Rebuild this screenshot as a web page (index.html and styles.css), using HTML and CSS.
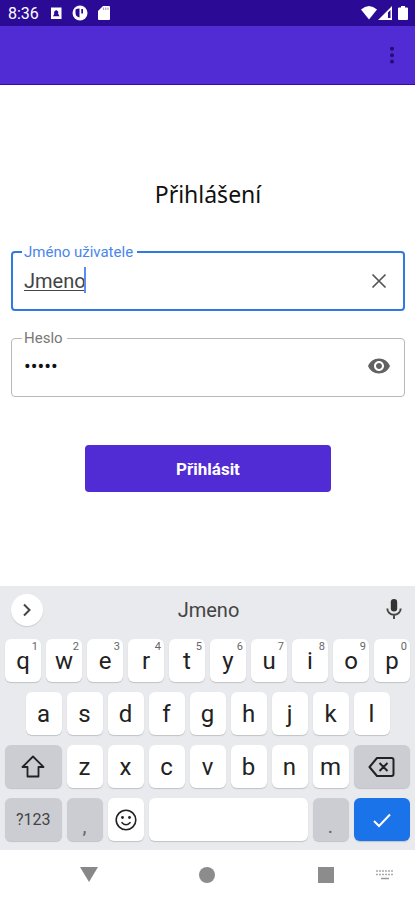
FILE: index.html
```html
<!DOCTYPE html>
<html lang="cs">
<head>
<meta charset="utf-8">
<meta name="viewport" content="width=device-width, initial-scale=1">
<title>Přihlášení</title>
<link rel="stylesheet" href="styles.css">
</head>
<body>
<div class="status">
  <span class="clock">8:36</span>
  <svg class="s-icon" viewBox="0 0 16 16"><path fill="#fff" fill-rule="evenodd" d="M3 2.500h10.500v11.500H3zM8.200 5 6.200 6.500v2.500L5 11.300h6.600L10.200 9V6.500z"/></svg>
  <svg class="s-icon s-round" viewBox="0 0 16 16"><circle cx="8" cy="8" r="7.500" fill="#fff"/><path fill="#2b0a96" d="M3.500 4.500Q5 3.500 7.500 3.500v9Q3.500 11.500 3.500 8zM9.300 4h1.700v4.500H9.300z"/></svg>
  <svg class="s-icon" viewBox="0 0 16 16"><path fill="#fff" d="M7 1h6a1 1 0 0 1 1 1v12a1 1 0 0 1-1 1H3a1 1 0 0 1-1-1V6z"/><path stroke="#a79dd2" stroke-width="1.200" d="M7.500 2.500v2.500M9.700 2.500v2.500M12 2.500v2.500"/></svg>
  <span class="spacer"></span>
  <svg class="s-icon" viewBox="0 0 16 16"><path fill="#fff" d="M0 4.500Q8-2.500 16 4.500L8 14.500z"/></svg>
  <svg class="s-icon" viewBox="0 0 16 16"><path fill="#fff" fill-rule="evenodd" d="M15 1v14H1zM11 7.500V13h2.500V5z"/></svg>
  <svg class="s-icon s-battery" viewBox="0 0 16 16"><path fill="#fff" d="M6 1h4v1.500h2a1 1 0 0 1 1 1V14a1 1 0 0 1-1 1H4a1 1 0 0 1-1-1V3.500a1 1 0 0 1 1-1h2z"/></svg>
</div>
<header class="appbar">
  <button class="icon-btn" aria-label="Další možnosti"><svg viewBox="0 0 24 24" width="24" height="24" fill="#250b75"><circle cx="12" cy="5.800" r="2"/><circle cx="12" cy="12.200" r="2"/><circle cx="12" cy="18.600" r="2"/></svg></button>
</header>
<main class="content">
  <h1>Přihlášení</h1>
  <form class="login">
    <fieldset class="field active">
      <legend><label for="user">Jméno uživatele</label></legend>
      <div class="row">
        <div class="entry"><input id="user" type="text" value="Jmeno" spellcheck="false"><span class="caret"></span></div>
        <button type="button" class="icon-btn" aria-label="Vymazat"><svg viewBox="0 0 24 24" width="24" height="24"><path d="M5.500 5.500l13 13M18.500 5.500l-13 13" stroke="#555" stroke-width="1.700"/></svg></button>
      </div>
    </fieldset>
    <fieldset class="field">
      <legend><label for="pass">Heslo</label></legend>
      <div class="row">
        <div class="entry"><input id="pass" type="password" value="heslo"></div>
        <button type="button" class="icon-btn" aria-label="Zobrazit heslo"><svg viewBox="0 0 24 24" width="24" height="24"><path fill="#626262" d="M12 4.500C7 4.500 2.730 7.610 1 12c1.730 4.390 6 7.500 11 7.500s9.270-3.110 11-7.500c-1.730-4.390-6-7.500-11-7.500zM12 17c-2.760 0-5-2.240-5-5s2.240-5 5-5 5 2.240 5 5-2.240 5-5 5zm0-8c-1.660 0-3 1.340-3 3s1.340 3 3 3 3-1.340 3-3-1.340-3-3-3z"/></svg></button>
      </div>
    </fieldset>
    <button type="submit" class="submit">Přihlásit</button>
  </form>
</main>
<section class="keyboard" aria-label="Klávesnice">
  <div class="suggest">
    <button class="more" aria-label="Více"><svg viewBox="0 0 24 24" width="24" height="24"><path d="M9 6.500l5.500 5.500L9 17.500" fill="none" stroke="#444" stroke-width="2"/></svg></button>
    <button class="word">Jmeno</button>
    <button class="icon-btn mic" aria-label="Hlasové zadávání"><svg viewBox="0 0 24 24" width="24" height="24"><rect x="8.800" y="1" width="6.400" height="12.500" rx="3.200" fill="#333"/><path d="M5.300 10.500a6.700 6.300 0 0 0 13.400 0M12 17v4" fill="none" stroke="#444" stroke-width="1.900"/></svg></button>
  </div>
  <div class="keys">
    <button>q<sup>1</sup></button><button>w<sup>2</sup></button><button>e<sup>3</sup></button><button>r<sup>4</sup></button><button>t<sup>5</sup></button><button>y<sup>6</sup></button><button>u<sup>7</sup></button><button>i<sup>8</sup></button><button>o<sup>9</sup></button><button>p<sup>0</sup></button>
    <button class="indent">a</button><button>s</button><button>d</button><button>f</button><button>g</button><button>h</button><button>j</button><button>k</button><button>l</button>
    <button class="wide grey first" aria-label="Shift"><svg viewBox="0 0 28 28" width="28" height="28"><path d="M14 3.500L3.500 14H8.500v9.500h11V14h5z" fill="none" stroke="#222" stroke-width="1.800" stroke-linejoin="round"/></svg></button><button>z</button><button>x</button><button>c</button><button>v</button><button>b</button><button>n</button><button>m</button><button class="wide grey" aria-label="Smazat"><svg viewBox="0 0 28 28" width="28" height="28"><path d="M9 5h14.500a2 2 0 0 1 2 2v14a2 2 0 0 1-2 2H9L1.500 14zM11.500 10l8 8M19.500 10l-8 8" fill="none" stroke="#222" stroke-width="2" stroke-linejoin="round"/></svg></button>
    <button class="wide grey small">?123</button><button class="grey punct">,</button><button aria-label="Emoji"><svg viewBox="0 0 24 24" width="24" height="24"><circle cx="12" cy="12" r="9.800" fill="none" stroke="#222" stroke-width="1.600"/><circle cx="8.500" cy="9.500" r="1.400" fill="#222"/><circle cx="15.500" cy="9.500" r="1.400" fill="#222"/><path d="M7.500 14.200q4.500 5 9 0" fill="none" stroke="#222" stroke-width="1.600"/></svg></button><button class="space" aria-label="Mezerník"></button><button class="grey punct">.</button><button class="wide enter" aria-label="Hotovo"><svg viewBox="0 0 24 24" width="24" height="24"><path d="M4 13l5 5L20 6.500" fill="none" stroke="#fff" stroke-width="2"/></svg></button>
  </div>
</section>
<nav class="nav">
  <button aria-label="Zpět"><svg viewBox="0 0 20 20" width="20" height="20"><path d="M1 2h18L10 17z" fill="#888"/></svg></button>
  <button class="home" aria-label="Domů"><svg viewBox="0 0 20 20" width="20" height="20"><circle cx="10" cy="10" r="8" fill="#8c8c8c"/></svg></button>
  <button class="recent" aria-label="Přehled"><svg viewBox="0 0 20 20" width="20" height="20"><path d="M2 2h16v16H2z" fill="#8c8c8c"/></svg></button>
  <button class="ime" aria-label="Přepnout klávesnici"><svg viewBox="0 0 20 20" width="20" height="20"><path d="M1 6h18M1 9.500h18" stroke="#aaa" stroke-width="1.500" stroke-dasharray="2 1"/><path d="M6 13.500h8" stroke="#999" stroke-width="1.500"/></svg></button>
</nav>
</body>
</html>
```
FILE: styles.css
```css
* { box-sizing: border-box; }
body {
  margin: 0;
  min-height: 100vh;
  display: flex;
  flex-direction: column;
  background: #fff;
  font-family: Roboto, "Noto Sans", sans-serif;
}
button {
  border: 0;
  padding: 0;
  background: none;
  font: inherit;
  color: inherit;
}
svg { display: block; }

.status {
  height: 26px;
  padding: 0 4px 0 8px;
  display: flex;
  align-items: center;
  background: #2b0a96;
  color: #fff;
}
.clock { width: 40px; font-size: 16px; }
.s-icon { width: 16px; height: 16px; margin-right: 8px; }
.spacer { flex: 1; }
.spacer ~ .s-icon { margin-right: 0; }
.status .s-battery { margin-left: 2px; }

.appbar {
  height: 59px;
  padding-right: 11px;
  display: flex;
  align-items: center;
  justify-content: flex-end;
  background: #512bd4;
  border-bottom: 1px solid #3409b8;
}
.icon-btn { width: 24px; height: 24px; flex: none; }

.content { flex: 1; padding: 93px 10px 0 11px; }
h1 {
  margin: 0 0 34px;
  text-align: center;
  font: 400 23px/32px "Noto Sans", sans-serif;
  color: #111;
}
.login { display: flex; flex-direction: column; }
.field {
  min-width: 0;
  margin: 0 0 20px;
  padding: 0 12px;
  border: 1px solid #b8b8b8;
  border-radius: 4px;
  color: #777;
}
.field.active {
  margin-bottom: 19px;
  padding: 0 11px;
  border: 2px solid #3079e3;
  color: #4a86ea;
}
legend { padding: 0 4px 0 2px; margin-left: -2px; font-size: 15px; line-height: 16px; }
.row { height: 49px; padding-bottom: 8px; display: flex; align-items: center; }
.field:not(.active) .row { height: 50px; padding-bottom: 10px; }
.row .icon-btn { margin-right: 1px; }
.entry { position: relative; flex: 1; }
.entry input {
  display: block;
  width: 100%;
  height: 28px;
  border: 0;
  padding: 0;
  outline: 0;
  background: none;
  font: 20px Roboto, sans-serif;
  color: #444;
}
#user { text-decoration: underline 1px; text-underline-offset: 2px; }
#pass { color: #111; }
.caret {
  position: absolute;
  left: 60px;
  top: 0;
  width: 2px;
  height: 26px;
  background: #5b8def;
}
.submit {
  align-self: center;
  width: 246px;
  height: 47px;
  margin-top: 28px;
  border-radius: 4px;
  background: #512bd4;
  color: #fff;
  font-size: 17px;
  font-weight: 700;
}

.keyboard { padding-bottom: 9px; background: #e8eaed; color: #222; }
.suggest {
  height: 53px;
  padding: 0 9px 6px 11px;
  display: grid;
  grid-template-columns: 32px 1fr 32px;
  align-items: center;
}
.more {
  width: 32px;
  height: 32px;
  display: grid;
  place-items: center;
  border-radius: 50%;
  background: #fff;
  box-shadow: 0 1px 1px #c8cace;
}
.mic { justify-self: end; }
.word { font-size: 20px; color: #444; }
.keys {
  padding: 0 3px 0 2px;
  display: grid;
  grid-template-columns: repeat(20, 1fr);
  row-gap: 10px;
}
.keys button {
  position: relative;
  grid-column: span 2;
  height: 43px;
  margin: 0 2px 0 3px;
  display: grid;
  place-items: center;
  border-radius: 6px;
  background: #fff;
  box-shadow: 0 1px 1px #c0c2c6;
  font-size: 24px;
}
.keys sup {
  position: absolute;
  top: 2px;
  right: 3px;
  font-size: 11px;
  line-height: 12px;
  color: #666;
}
.keys .indent { grid-column: 2 / span 2; }
.keys .wide { grid-column: span 3; }
.keys .first { grid-column: 1 / span 3; }
.keys .space { grid-column: span 8; }
.keys .grey { background: #cccdd3; }
.keys .small { font-size: 16px; color: #444; }
.keys .punct { padding-top: 12px; font-size: 20px; color: #666; }
.keys .enter { background: #1a73e8; }

.nav {
  height: 50px;
  padding-left: 59px;
  display: grid;
  grid-template-columns: repeat(6, 1fr);
}
.nav button { display: grid; place-items: center; }
.home { grid-column: 3; }
.recent { grid-column: 5; }
.ime { grid-column: 6; }
```
